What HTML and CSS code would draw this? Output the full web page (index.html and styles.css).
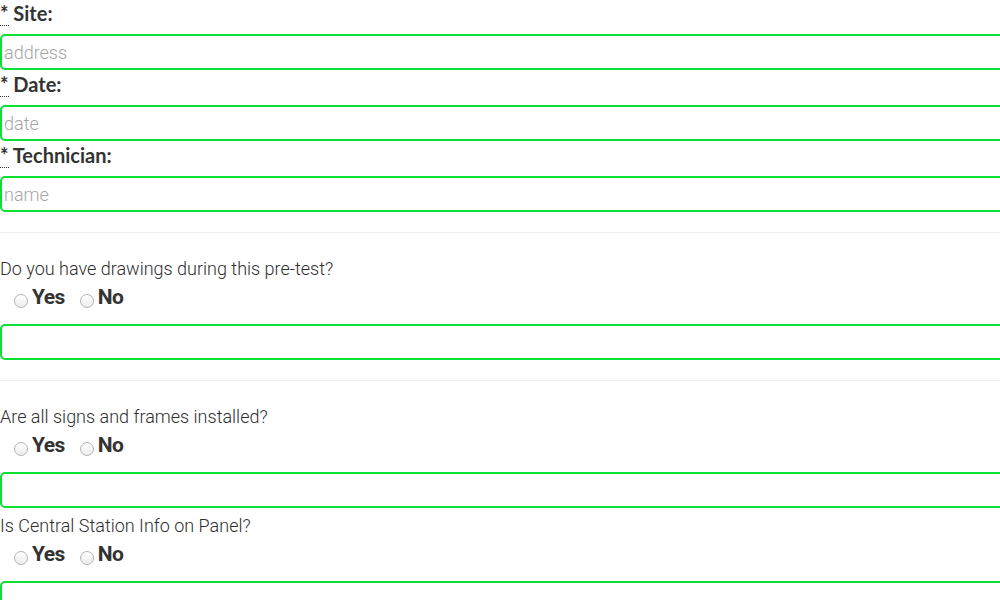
FILE: index.html
```html
<!DOCTYPE html>
<html lang="en">
<head>
<meta charset="utf-8">
<title>Pre-test</title>
<link rel="stylesheet" href="styles.css">
</head>
<body>
<form class="form">
  <div class="field">
    <label class="label"><abbr class="req" title="required">*</abbr> Site:</label>
    <input class="input" type="text" placeholder="address">
  </div>
  <div class="field">
    <label class="label"><abbr class="req" title="required">*</abbr> Date:</label>
    <input class="input" type="text" placeholder="date">
  </div>
  <div class="field">
    <label class="label"><abbr class="req" title="required">*</abbr> Technician:</label>
    <input class="input" type="text" placeholder="name">
  </div>

  <hr class="sep">

  <div class="question">
    <p class="q-text">Do you have drawings during this pre-test?</p>
    <div class="choices">
      <label class="choice"><input class="radio" type="radio" name="q1">Yes</label>
      <label class="choice"><input class="radio" type="radio" name="q1">No</label>
    </div>
    <input class="input" type="text">
  </div>

  <hr class="sep">

  <div class="question">
    <p class="q-text">Are all signs and frames installed?</p>
    <div class="choices">
      <label class="choice"><input class="radio" type="radio" name="q2">Yes</label>
      <label class="choice"><input class="radio" type="radio" name="q2">No</label>
    </div>
    <input class="input" type="text">
  </div>

  <div class="question">
    <p class="q-text">Is Central Station Info on Panel?</p>
    <div class="choices">
      <label class="choice"><input class="radio" type="radio" name="q3">Yes</label>
      <label class="choice"><input class="radio" type="radio" name="q3">No</label>
    </div>
    <input class="input" type="text">
  </div>
</form>
</body>
</html>
```
FILE: styles.css
```css
html, body {
  margin: 0;
  padding: 0;
  background: #ffffff;
  overflow: hidden;
}

.form {
  width: 1020px;
  margin-top: -1px;
  color: #333333;
}

.field {
  display: block;
}

.label {
  display: block;
  font-family: Lato, "Open Sans", sans-serif;
  font-weight: 700;
  font-size: 20px;
  line-height: 28px;
  margin-bottom: 7px;
  color: #333;
}

.req {
  text-decoration: none;
  border-bottom: 1px dotted #333;
}

.input {
  display: block;
  box-sizing: border-box;
  width: 100%;
  height: 36px;
  margin: 0;
  padding: 0 2px;
  border: 2px solid #0be037;
  border-radius: 5px;
  font-family: Roboto, "Liberation Sans", sans-serif;
  font-weight: 300;
  font-size: 18px;
  color: #333;
  background: #fff;
  outline: none;
}

.input::placeholder {
  color: #a6a6a6;
}

.sep {
  border: 0;
  border-top: 1px solid #eeeeee;
  margin: 20px 0 18px;
  height: 0;
}

.question {
  display: block;
  padding-top: 2px;
}

.q-text {
  margin: 0;
  font-family: Roboto, "Liberation Sans", sans-serif;
  font-weight: 300;
  font-size: 18px;
  line-height: 32px;
  color: #2e2e2e;
}

.choices {
  display: flex;
  gap: 15px;
  padding-left: 14px;
  margin-bottom: 15px;
  align-items: baseline;
}

.choice {
  font-family: Roboto, "Liberation Sans", sans-serif;
  font-weight: 700;
  font-size: 21px;
  line-height: 24px;
  letter-spacing: -0.6px;
  color: #333;
}

.radio {
  appearance: none;
  -webkit-appearance: none;
  width: 14px;
  height: 14px;
  margin: 0 4px 0 0;
  border: 1px solid #b4b4b4;
  border-radius: 50%;
  background: linear-gradient(#ffffff, #ececec);
  box-sizing: border-box;
  vertical-align: -4px;
}
```
